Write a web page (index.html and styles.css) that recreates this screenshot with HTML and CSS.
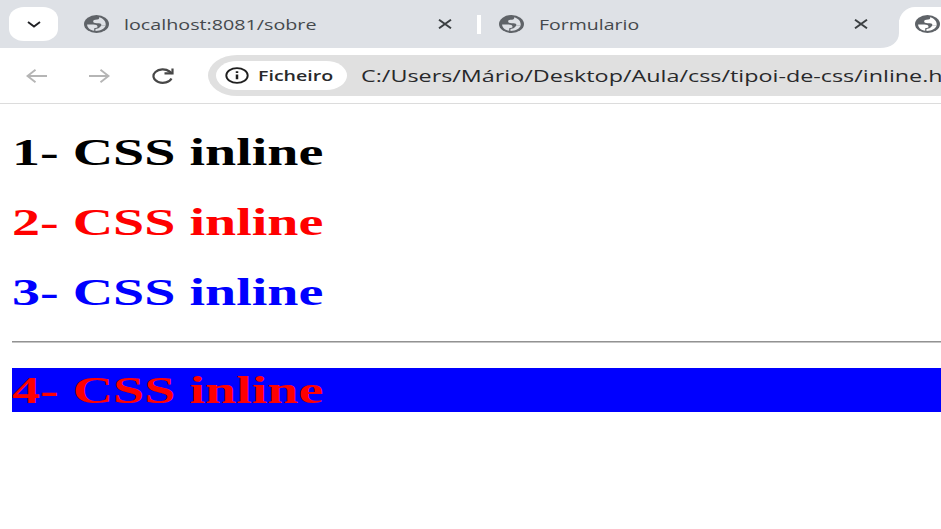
FILE: index.html
```html
<!DOCTYPE html>
<html lang="pt">
<head>
<meta charset="utf-8">
<title>CSS inline</title>
<link rel="stylesheet" href="styles.css">
</head>
<body>
<svg class="defs" width="0" height="0" aria-hidden="true">
  <symbol id="globe" viewBox="0 0 24 24" preserveAspectRatio="none">
    <circle cx="12" cy="12" r="12" fill="#5f6368"/>
    <path d="M14.500 3C15 5.500 13.500 6.200 11 6.400C9 6.600 8.500 8 9 9.500C9.500 10.800 11.500 10.800 14 11C16.500 11.200 17 12.500 16.500 14H20.800C21.300 9 19 4.800 14.500 3Z" fill="currentColor"/>
    <path d="M3 12.500H9C11.500 12.500 13 13.500 13 15.500C13 17 11.500 17.300 9.800 17.500V21C6 20 3 17 3 12.500Z" fill="currentColor"/>
    <path d="M11 21.200V18.500C14.500 18.300 15.300 16.300 16.500 14H20.800C20 18 16.500 21.200 11 21.200Z" fill="currentColor"/>
  </symbol>
</svg>
<header class="browser">
  <div class="tabs">
    <div class="search"><svg width="14" height="7" viewBox="0 0 14 7"><path d="M1 1L7 5.500L13 1" fill="none" stroke="#202124" stroke-width="1.900"/></svg></div>
    <div class="tab first">
      <svg class="globe"><use href="#globe"/></svg>
      <span class="title host"><span>localhost:8081/sobre</span></span>
      <svg class="close" viewBox="0 0 14 10"><path d="M1 .7L13 9.300M13 .7L1 9.300" stroke="#3c4043" stroke-width="1.900"/></svg>
    </div>
    <div class="divider"></div>
    <div class="tab second">
      <svg class="globe"><use href="#globe"/></svg>
      <span class="title form"><span>Formulario</span></span>
      <svg class="close" viewBox="0 0 14 10"><path d="M1 .7L13 9.300M13 .7L1 9.300" stroke="#3c4043" stroke-width="1.900"/></svg>
    </div>
    <svg class="curve" viewBox="0 0 20 48"><path d="M0 48C11 48 19 42 19 33V20H20V48Z" fill="#fff"/></svg>
    <div class="tab active"><svg class="globe"><use href="#globe"/></svg></div>
  </div>
  <div class="toolbar">
    <svg class="arrow back" viewBox="0 0 22 14"><path d="M21 7H2M9.500 .8L1.500 7L9.500 13.200" fill="none" stroke="#b5b5b5" stroke-width="1.900"/></svg>
    <svg class="arrow forward" viewBox="0 0 22 14"><path d="M1 7H20M12.500 .8L20.500 7L12.500 13.200" fill="none" stroke="#b5b5b5" stroke-width="1.900"/></svg>
    <svg class="reload" viewBox="0 0 24 16"><path d="M20.500 10.500A9.300 6.700 0 1 1 18.500 3.500L21 5.300" fill="none" stroke="#474747" stroke-width="2.200"/><path d="M21.500 .5V5.300H13.500" fill="none" stroke="#474747" stroke-width="2.200"/></svg>
    <div class="address">
      <div class="chip">
        <svg width="24" height="17" viewBox="0 0 24 17"><ellipse cx="12" cy="8.500" rx="10.700" ry="7.400" fill="none" stroke="#1f1f1f" stroke-width="1.900"/><path d="M12 7.500V12.300M12 4.300V6" stroke="#1f1f1f" stroke-width="2.500"/></svg>
        <span class="scheme"><span>Ficheiro</span></span>
      </div>
      <span class="url"><span>C:/Users/Mário/Desktop/Aula/css/tipoi-de-css/inline.h</span></span>
    </div>
  </div>
</header>
<main>
  <h1><span>1- CSS inline</span></h1>
  <h1 class="red"><span>2- CSS inline</span></h1>
  <h1 class="blue"><span>3- CSS inline</span></h1>
  <hr>
  <h1 class="red filled"><span>4- CSS inline</span></h1>
</main>
</body>
</html>
```
FILE: styles.css
```css
* { box-sizing: border-box; }
body { margin: 0; width: 941px; height: 529px; overflow: hidden; background: #fff; }
svg { display: block; flex: none; }
.defs { position: absolute; }
.browser { height: 104px; border-bottom: 1px solid #dcdcdc; font-family: "Open Sans", "Noto Sans", sans-serif; }
.tabs { display: flex; align-items: center; height: 48px; background: #dee1e6; }
.search { display: flex; flex: none; align-items: center; justify-content: center; width: 49px; height: 34px; margin-left: 9px; border-radius: 15px / 12px; background: #fff; }
.tab { display: flex; flex: none; align-items: center; height: 48px; }
.first { width: 419px; padding-left: 26px; }
.globe { width: 25px; height: 18px; color: #dee1e6; }
.title, .scheme, .url { display: block; flex: none; white-space: nowrap; }
.title > span, .scheme > span, .url > span, h1 > span { display: inline-block; transform-origin: 0 50%; }
.title { margin-left: 15px; font-size: 15px; line-height: 20px; color: #45494d; }
.host { width: 314px; }
.host > span { transform: scaleX(1.314); }
.close { width: 14px; height: 10px; }
.divider { flex: none; width: 4px; height: 19px; background: #fff; }
.second { width: 399px; padding-left: 18px; }
.form { width: 315px; }
.form > span { transform: scaleX(1.3); }
.curve { width: 20px; height: 48px; }
.active { flex: 1; min-width: 0; height: 41px; align-self: flex-end; margin-left: -1px; padding: 0 0 7px 16px; border-radius: 16px 0 0; background: #fff; }
.active .globe { color: #fff; }
.toolbar { display: flex; align-items: center; height: 55px; }
.arrow { width: 22px; height: 14px; }
.back { margin-left: 26px; }
.forward { margin-left: 40px; }
.reload { width: 24px; height: 16px; margin-left: 41px; }
.address { display: flex; flex: 1; min-width: 0; align-items: center; height: 41px; margin-left: 33px; padding-left: 8px; border-radius: 29px 0 0 29px / 20.5px 0 0 20.5px; background: #e0e0e0; overflow: hidden; }
.chip { display: flex; flex: none; align-items: center; width: 131px; height: 29px; padding-left: 9px; border-radius: 21px / 14.5px; background: #fff; }
.scheme { margin-left: 9px; font-size: 14.5px; line-height: 20px; font-weight: 600; color: #28292b; }
.scheme > span { transform: scaleX(1.35); }
.url { margin-left: 14px; font-size: 17px; line-height: 24px; color: #28292b; }
.url > span { transform: scaleX(1.373); }
main { padding: 26px 0 0 12px; }
h1 { height: 44px; margin: 0 0 26px; font: bold 37px/46px "Liberation Serif", serif; white-space: nowrap; }
h1 > span { transform: scaleX(1.514); }
.red { color: red; }
.blue { color: blue; }
hr { height: 2px; margin: 27px 0 25px; border: 0; border-top: 1px solid #929292; background: #c5c5c5; }
.filled { background: blue; }
```
